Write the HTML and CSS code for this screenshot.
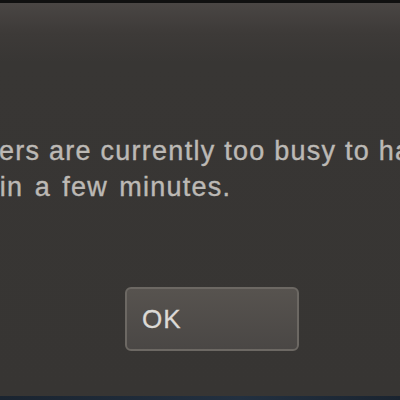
FILE: index.html
```html
<!DOCTYPE html>
<html lang="en">
<head>
  <meta charset="UTF-8" />
  <meta name="viewport" content="width=device-width, initial-scale=1.0"/>
  <title>Steam - Error</title>
  <link rel="stylesheet" href="styles.css">
</head>
<body>
  <div class="frame-top"></div>

  <div class="dialog">
    <p class="message">
      <span class="line">The Steam servers are currently too busy to handle your request.</span>
      <span class="line line-second">Please try again in a few minutes.</span>
    </p>

    <div class="actions">
      <button class="btn">OK</button>
    </div>
  </div>

  <div class="taskbar"></div>
</body>
</html>
```

FILE: styles.css
```css
html, body {
  margin: 0;
  padding: 0;
  height: 100%;
  overflow: hidden;
}

body {
  font-family: "Liberation Sans", Arial, sans-serif;
  background: #373533;
  display: flex;
  flex-direction: column;
}

.frame-top {
  height: 3px;
  background: #101010;
}

.dialog {
  flex: 1;
  background: linear-gradient(to bottom, #4a4644 0px, #3d3a38 30px, #383634 60px, #373533 100%);
  padding-top: 130px;
}

.message {
  margin: 0 0 0 -209px;
  white-space: nowrap;
  font-size: 27px;
  line-height: 36px;
  letter-spacing: 1.25px;
  color: #bcb9b5;
  -webkit-text-stroke: 0.4px #bcb9b5;
}

.line {
  display: block;
}

.line-second {
  margin-left: -21px;
  word-spacing: 2.5px;
}

.actions {
  margin-top: 82px;
  padding-left: 125px;
}

.btn {
  width: 174px;
  height: 64px;
  padding: 0 0 0 15px;
  text-align: left;
  font-family: inherit;
  font-size: 26px;
  letter-spacing: 1px;
  color: #dcdad6;
  -webkit-text-stroke: 0.3px #dcdad6;
  background: linear-gradient(to bottom, #57534f, #4a4745);
  border: 2px solid #6c6863;
  border-radius: 6px;
}

.taskbar {
  height: 4px;
  background: linear-gradient(to right, #1a2430, #223040 60%, #1a2430);
}
```
